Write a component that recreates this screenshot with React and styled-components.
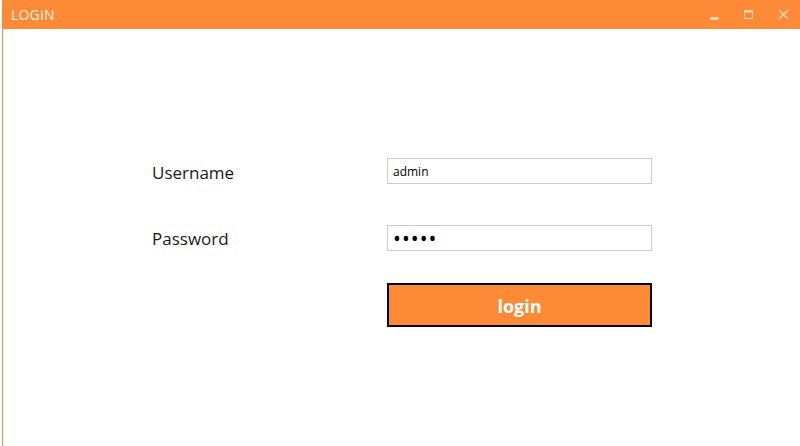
import React from "react";
import styled, { createGlobalStyle } from "styled-components";

const Global = createGlobalStyle`
  html, body {
    margin: 0;
    padding: 0;
    background: #ffffff;
  }
  body {
    font-family: "Open Sans", "Noto Sans", sans-serif;
  }
`;

const Page = styled.div`
  width: 800px;
  height: 446px;
  display: flex;
  background: #ffffff;
  overflow: hidden;
`;

const Window = styled.div`
  margin-left: 2px;
  flex: 1;
  display: flex;
  flex-direction: column;
  border-left: 1px solid #fd8a37;
`;

const TitleBar = styled.div`
  height: 29px;
  margin-left: -1px;
  background-color: #fd8a37;
  display: flex;
  align-items: center;
  padding-left: 9px;
  color: #fff0e2;
  font-size: 14px;
`;

const Title = styled.div`
  flex: 1;
  letter-spacing: 0.2px;
`;

const Controls = styled.div`
  display: flex;
  align-items: center;
  height: 100%;
`;

const Ctrl = styled.div`
  width: 34px;
  height: 100%;
  display: flex;
  justify-content: center;
  align-items: center;
`;

const Body = styled.div`
  flex: 1;
  padding: 129px 0 0 149px;
`;

const Form = styled.div`
  display: grid;
  grid-template-columns: 235px 265px;
  grid-template-rows: 26px 26px 44px;
  row-gap: 41px;
  align-items: center;
`;

const Label = styled.div`
  font-size: 17px;
  color: #1a1a1a;
  padding-top: ${(p) => (p.$up ? "0" : "3px")};
`;

const Input = styled.input`
  box-sizing: border-box;
  width: 265px;
  height: 26px;
  border: 1px solid #cccccc;
  padding: 0 5px;
  font-family: "Open Sans", "Noto Sans", sans-serif;
  font-size: ${(p) => (p.type === "password" ? "21px" : "12px")};
  color: #000;
  outline: none;
  letter-spacing: ${(p) => (p.type === "password" ? "1px" : "0")};
`;

const Button = styled.button`
  grid-column: 2;
  align-self: start;
  margin-top: -9px;
  box-sizing: border-box;
  width: 265px;
  height: 44px;
  background-color: #fd8a37;
  border: 2px solid #000;
  color: #ffffff;
  font-family: "Open Sans", "Noto Sans", sans-serif;
  font-weight: 700;
  font-size: 18px;
  padding: 2px 0 0;
`;

const App = () => {
  return (
    <>
      <Global />
      <Page>
        <Window>
          <TitleBar>
            <Title>LOGIN</Title>
            <Controls>
              <Ctrl>
                <svg width="10" height="10" viewBox="0 0 10 10">
                  <rect x="0" y="7" width="9" height="3" fill="#fdd4ad" />
                </svg>
              </Ctrl>
              <Ctrl>
                <svg width="10" height="10" viewBox="0 0 10 10">
                  <rect x="0.5" y="0.5" width="8" height="8" fill="none" stroke="#fdd4ad" />
                  <rect x="0.5" y="0.5" width="8" height="2" fill="#fdd4ad" />
                </svg>
              </Ctrl>
              <Ctrl>
                <svg width="11" height="11" viewBox="0 0 11 11">
                  <path d="M1 1 L10 10 M10 1 L1 10" stroke="#fdd4ad" strokeWidth="1.6" />
                </svg>
              </Ctrl>
            </Controls>
          </TitleBar>
          <Body>
            <Form>
              <Label>Username</Label>
              <Input type="text" defaultValue="admin" />
              <Label $up>Password</Label>
              <Input type="password" defaultValue="admin" />
              <Button>login</Button>
            </Form>
          </Body>
        </Window>
      </Page>
    </>
  );
};

export default App;
